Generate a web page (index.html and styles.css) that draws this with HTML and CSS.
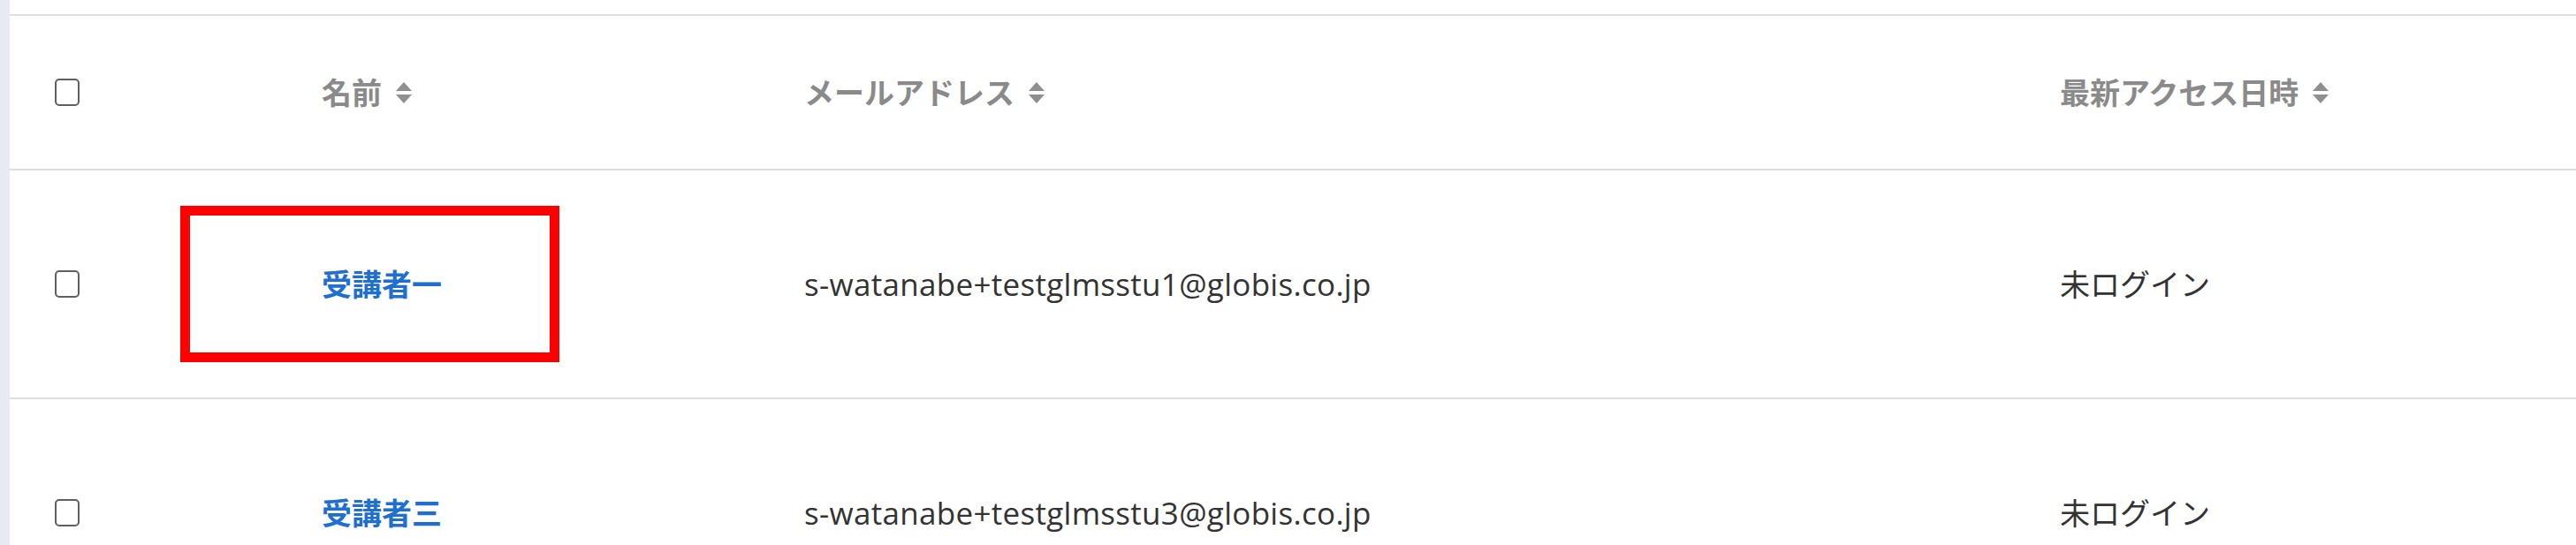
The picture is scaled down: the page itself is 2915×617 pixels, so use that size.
FILE: index.html
```html
<!DOCTYPE html>
<html lang="ja">
<head>
<meta charset="utf-8">
<title>受講者一覧</title>
<link rel="stylesheet" href="styles.css">
</head>
<body>
<div class="page">
  <div class="side-strip"></div>
  <main class="main">
    <div class="table">
      <div class="row head">
        <div class="cell c-check"><span class="checkbox"></span></div>
        <div class="cell c-name"><span class="th">名前</span><svg class="sort" viewBox="0 0 20 28" width="20" height="28"><polygon points="1,12 10,2 19,12"/><polygon points="1,16 19,16 10,26"/></svg></div>
        <div class="cell c-mail"><span class="th">メールアドレス</span><svg class="sort" viewBox="0 0 20 28" width="20" height="28"><polygon points="1,12 10,2 19,12"/><polygon points="1,16 19,16 10,26"/></svg></div>
        <div class="cell c-access"><span class="th">最新アクセス日時</span><svg class="sort" viewBox="0 0 20 28" width="20" height="28"><polygon points="1,12 10,2 19,12"/><polygon points="1,16 19,16 10,26"/></svg></div>
      </div>
      <div class="row body-row">
        <div class="highlight"></div>
        <div class="cell c-check"><span class="checkbox"></span></div>
        <div class="cell c-name"><a class="name-link">受講者一</a></div>
        <div class="cell c-mail"><span class="mail">s-watanabe+testglmsstu1@globis.co.jp</span></div>
        <div class="cell c-access">未ログイン</div>
      </div>
      <div class="row body-row">
        <div class="cell c-check"><span class="checkbox"></span></div>
        <div class="cell c-name"><a class="name-link">受講者三</a></div>
        <div class="cell c-mail"><span class="mail">s-watanabe+testglmsstu3@globis.co.jp</span></div>
        <div class="cell c-access">未ログイン</div>
      </div>
    </div>
  </main>
</div>
</body>
</html>
```

FILE: styles.css
```css
html, body {
  margin: 0;
  padding: 0;
  background: #ffffff;
}
body {
  font-family: "Open Sans", "Noto Sans CJK JP", sans-serif;
  font-size: 34px;
  color: #333333;
  overflow: hidden;
}
.page {
  display: flex;
  min-height: 617px;
}
.side-strip {
  width: 11px;
  flex: 0 0 11px;
  background: #e7e9f3;
}
.main {
  flex: 1;
  padding-top: 16px;
  background: #ffffff;
}
.table {
  border-top: 2px solid #dedede;
}
.row {
  position: relative;
  display: grid;
  grid-template-columns: 353px 546px 1421px 1fr;
  align-items: center;
  border-bottom: 2px solid #dedede;
}
.row.head {
  height: 173px;
}
.row.body-row {
  height: 257px;
}
.cell {
  display: flex;
  align-items: center;
  line-height: 1.3;
  white-space: nowrap;
}
.c-check {
  padding-left: 51px;
}
.checkbox {
  display: block;
  width: 24px;
  height: 27px;
  border: 2px solid #5f5f5f;
  border-radius: 5px;
  background: #ffffff;
}
.th {
  font-family: "Noto Sans CJK JP", sans-serif;
  font-weight: 700;
  color: #8a8a8a;
}
.sort {
  margin-left: 15px;
  fill: #8f8f8f;
}
.name-link {
  font-family: "Noto Sans CJK JP", sans-serif;
  font-weight: 700;
  color: #1d6fd2;
  text-decoration: none;
}
.mail {
  font-size: 35px;
  letter-spacing: 0.3px;
}
.c-access {
  font-family: "Noto Sans CJK JP", sans-serif;
}
.highlight {
  position: absolute;
  left: 193px;
  top: 40px;
  width: 407px;
  height: 155px;
  border: 11px solid #ff0000;
  pointer-events: none;
}
```
